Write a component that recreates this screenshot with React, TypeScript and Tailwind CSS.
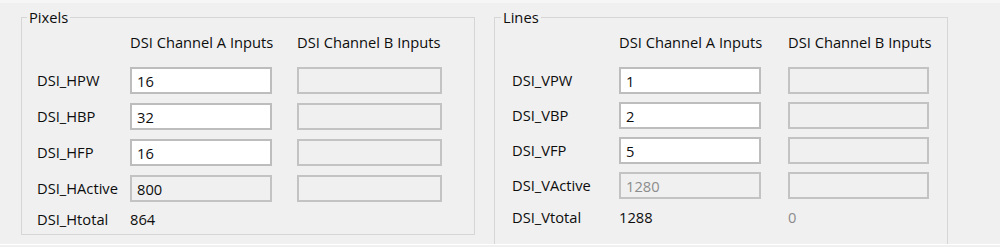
import React from "react";

type Mode = "edit" | "readonly" | "disabled";

type Row = {
  label: string;
  a: string;
  mode?: Mode;
};

type GroupProps = {
  title: string;
  rows: Row[];
  total: { label: string; a: string; b?: string };
  cols: string;
  gap: string;
  padLeft: string;
  legendShift: string;
  rowGap: string;
  totalGap: string;
  height: string;
};

function Field({ value, mode = "edit" }: { value?: string; mode?: Mode }) {
  const styles = {
    edit: "border-[#bdbdbd] bg-white text-[#0d0d0d]",
    readonly: "border-[#c3c3c3] bg-[#f0f0f0] text-[#0d0d0d]",
    disabled: "border-[#c3c3c3] bg-[#f0f0f0] text-[#8c8c8c]",
  };
  return (
    <input
      readOnly
      disabled={mode === "disabled"}
      defaultValue={value ?? ""}
      className={`h-[27px] w-full border-2 px-[5px] outline-none ${styles[mode]}`}
    />
  );
}

function Group({
  title,
  rows,
  total,
  cols,
  gap,
  padLeft,
  legendShift,
  rowGap,
  totalGap,
  height,
}: GroupProps) {
  return (
    <fieldset
      className={`w-[454px] shrink-0 border border-[#d6d6d6] ${padLeft} ${height}`}
    >
      <legend className={`${legendShift} px-[2px] leading-[20px]`}>{title}</legend>
      <div className={`mt-[5px] grid ${cols} ${gap} h-[20px] items-center leading-[20px]`}>
        <span />
        <span className="whitespace-nowrap">DSI Channel A Inputs</span>
        <span className="whitespace-nowrap">DSI Channel B Inputs</span>
      </div>
      <div className={`mt-[15px] flex flex-col ${rowGap}`}>
        {rows.map((r) => (
          <div key={r.label} className={`grid ${cols} ${gap} h-[27px] items-center`}>
            <span className="whitespace-nowrap">{r.label}</span>
            <Field value={r.a} mode={r.mode} />
            <Field mode="disabled" />
          </div>
        ))}
      </div>
      <div className={`${totalGap} grid ${cols} ${gap} h-[20px] items-center leading-[20px]`}>
        <span className="whitespace-nowrap">{total.label}</span>
        <span>{total.a}</span>
        <span className="text-[#8c8c8c]">{total.b ?? ""}</span>
      </div>
    </fieldset>
  );
}

export default function App() {
  return (
    <div className="flex h-[247px] w-[1000px] flex-col overflow-hidden bg-[#f0f0f0] font-['Open_Sans','Noto_Sans',sans-serif] text-[14.7px] text-[#0d0d0d]">
      <div className="h-[3px] bg-[#f6f6f6]" />
      <div className="flex h-[242px] items-start gap-[19px] overflow-hidden border-b border-white pl-[21px] pt-[4px]">
        <Group
          title="Pixels"
          rows={[
            { label: "DSI_HPW", a: "16" },
            { label: "DSI_HBP", a: "32" },
            { label: "DSI_HFP", a: "16" },
            { label: "DSI_HActive", a: "800", mode: "readonly" },
          ]}
          total={{ label: "DSI_Htotal", a: "864" }}
          cols="grid-cols-[68px_142px_145px]"
          gap="gap-x-[25px]"
          padLeft="pl-[15px]"
          legendShift="-ml-[10px]"
          rowGap="gap-[9px]"
          totalGap="mt-[7px]"
          height="h-[228px]"
        />
        <Group
          title="Lines"
          rows={[
            { label: "DSI_VPW", a: "1" },
            { label: "DSI_VBP", a: "2" },
            { label: "DSI_VFP", a: "5" },
            { label: "DSI_VActive", a: "1280", mode: "disabled" },
          ]}
          total={{ label: "DSI_Vtotal", a: "1288", b: "0" }}
          cols="grid-cols-[80px_142px_141px]"
          gap="gap-x-[27px]"
          padLeft="pl-[17px]"
          legendShift="-ml-[11px]"
          rowGap="gap-[8px]"
          totalGap="mt-[8px]"
          height="h-[260px]"
        />
      </div>
    </div>
  );
}
